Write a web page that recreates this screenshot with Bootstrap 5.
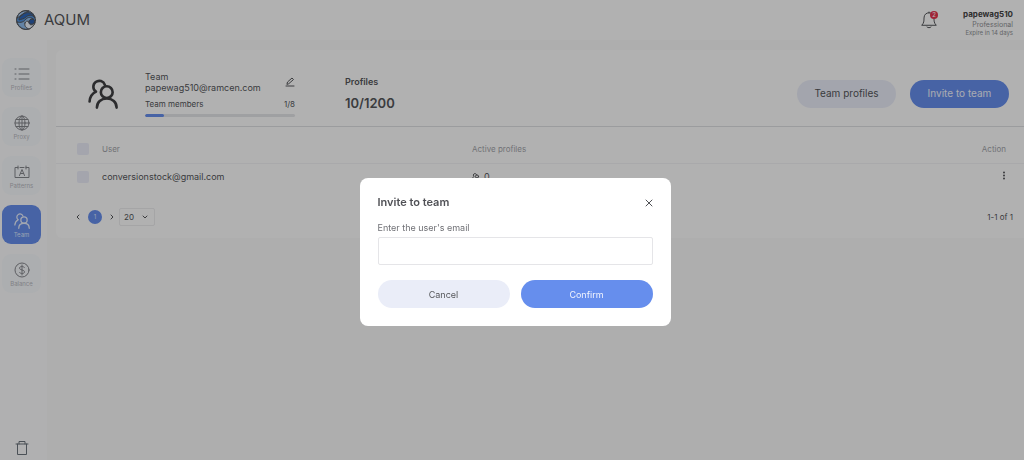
<!DOCTYPE html>
<html lang="en">
<head>
<meta charset="utf-8">
<meta name="viewport" content="width=device-width, initial-scale=1">
<title>AQUM – Team</title>
<link href="https://cdn.jsdelivr.net/npm/bootstrap@5.3.0/dist/css/bootstrap.min.css" rel="stylesheet">
<style>
  :root { --ink: #55565a; --muted: #a3a5aa; --accent: #668eed; --soft: #eaedf8; --line: #ececee; }
  body { font-family: Inter, "Open Sans", sans-serif; font-size: 9px; line-height: 11px; color: var(--ink); background: #f9f9fa; }
  svg { display: block; fill: none; stroke: currentColor; stroke-linecap: round; stroke-linejoin: round; }
  .topbar { height: 40px; background: #fefefe; padding: 0 11px 0 16px; }
  .brand { font-size: 15px; line-height: 20px; color: var(--ink); }
  .bell { margin-right: 26px; color: #77797d; }
  .account { line-height: 9px; color: #8d8f94; font-size: 7px; padding-top: 4px; }
  .account strong { font-size: 8px; line-height: 11px; color: #444; }
  .account small { font-size: 6px; line-height: 7px; }
  .bell-count { position: absolute; top: 0; right: -1px; width: 8px; height: 8px; border-radius: 50%; background: #e5344f; color: #fff; font-size: 6px; line-height: 8px; text-align: center; }
  .sidebar { width: 47px; background: #fdfdfe; padding: 18px 6px 4px 2px; }
  .tiles { gap: 10px; }
  .tile { height: 39px; border-radius: 9px; background: #f7f9fd; color: #85878c; font-size: 6px; line-height: 8px; text-decoration: none; gap: 2px; padding-top: 2px; }
  .tile span { color: #b7b9bf; }
  .tile.active { background: var(--accent); color: #e9effd; }
  .tile.active span { color: #dce6ff; }
  .app { min-height: calc(100vh - 40px); }
  .content { padding: 10px 0 0 9px; }
  .panel { background: #fefefe; border-radius: 6px 0 0 6px; }
  .summary { height: 77px; border-bottom: 1px solid #dfe0e2; padding: 11px 15px 0 32px; }
  .summary .actions { gap: 14px; }
  .summary .pill { width: 99px; font-size: 10px; }
  .team { width: 150px; margin-left: 27px; }
  .team .members { font-size: 8px; margin-top: 6px; }
  .team .meter { height: 3px; margin-top: 4px; background: #e4e5e9; border-radius: 2px; }
  .team .progress-bar { background: var(--accent); border-radius: 2px; }
  .stat { margin-left: 50px; }
  .stat b { font-weight: 600; }
  .stat .total { font-size: 13px; line-height: 16px; font-weight: 600; }
  .pill { height: 28px; border: 0; border-radius: 14px; background: var(--soft); color: var(--ink); padding: 0; font-size: 9px; }
  .pill.primary { background: var(--accent); color: #f2f5fe; }
  .bare { border: 0; background: none; padding: 0; color: inherit; }
  .users { margin: 0; table-layout: fixed; color: var(--ink); --bs-table-bg: transparent; --bs-table-color: var(--ink); }
  .users > :not(caption) > * > * { border: 0; padding: 0; vertical-align: middle; font-weight: 400; box-shadow: none; }
  .users > thead > tr > th { height: 36px; padding-top: 9px; border-bottom: 1px solid #f3f3f5; color: var(--muted); font-size: 8px; }
  .users > tbody > tr > td { height: 27px; }
  .users > * > tr > .pick { width: 46px; padding-left: 21px; }
  .users .user { width: 370px; }
  .users > * > tr > .act { padding-right: 18px; text-align: right; }
  .users .form-check-input { display: block; width: 12px; height: 12px; margin: 0; border: 0; border-radius: 2px; background-color: #ebedf8; }
  .pager { padding: 18px 11px 12px 20px; font-size: 8px; }
  .pager .current { width: 14px; height: 14px; border-radius: 50%; background: var(--accent); color: #dce6ff; font-size: 6px; line-height: 14px; text-align: center; text-decoration: none; }
  .size { width: 36px; height: 18px; margin-left: 5px; }
  .size select { width: 100%; height: 18px; appearance: none; border: 1px solid var(--line); border-radius: 2px; background: none; color: var(--ink); padding: 0 4px; font-size: 8px; }
  .size svg { position: absolute; right: 7px; top: 7px; pointer-events: none; }
  .modal-backdrop { --bs-backdrop-opacity: .3; }
  .modal.invite { padding: 44px 0 0 6px; overflow: hidden; }
  .modal.invite .modal-dialog { max-width: 311px; margin: 0 auto; min-height: 100%; }
  .modal.invite .modal-content { border: 0; border-radius: 8px; padding: 18px; color: #505156; }
  .modal.invite h1 { font-size: 11px; line-height: 13px; font-weight: 600; }
  .modal.invite label { margin: 13px 0 4px; line-height: 11px; color: #707176; }
  .modal.invite .form-control { height: 28px; border: 1px solid #e5e5e8; border-radius: 2px; font-size: 9px; padding: 0 8px; }
  .modal.invite .actions { gap: 11px; margin-top: 15px; }
</style>
</head>
<body>
<svg width="0" height="0" class="position-absolute" aria-hidden="true">
  <symbol id="people" viewBox="0 0 32 32">
    <path d="M18 6.300A6.300 6.300 0 1 0 8.500 13.500C4.500 15.500 2 19 1.700 24"/>
    <circle cx="20" cy="14" r="6.300"/>
    <path d="M9.500 30.500C9.500 24.500 14 20.800 20 20.800S30.500 24.500 30.500 30.500"/>
  </symbol>
</svg>

<header class="topbar d-flex align-items-center">
  <svg width="20" height="20" viewBox="0 0 20 20" stroke="none" aria-hidden="true">
    <circle cx="10" cy="10" r="9.500" fill="#4f8fd8"/>
    <path d="M1 8C2 2 8 0 13 1C8 2 5 6 1 8Z" fill="#a5caf2"/>
    <path d="M6 5C10 1 17 2 19 8C16 4 12 5 10 7C8 9 5 9 3 10C3 8 4 6 6 5Z" fill="#2e68ba"/>
    <path d="M1 12C5 13 8 12 10 9C12 7 15 7 17 9C14 9 13 10 13 12C11 11 9 13 10 15C11 17 13 18 14 18.500C8 21 2 17 1 12Z" fill="#8fbcec"/>
    <path d="M9 13C10 10 13 11 13 13C14 16 17 15 19 12C18 16 15 18 13 19C10 18 8 16 9 13Z" fill="#edf4fc"/>
    <path d="M17 9C19 10 19 12 18 13C16 15 13 14 13 12C13 10 15 9 17 9Z" fill="#2a5eae"/>
  </svg>
  <span class="brand ms-2">AQUM</span>
  <div class="ms-auto d-flex align-items-center">
    <button class="bare bell position-relative" aria-label="Notifications">
      <svg width="16" height="18" viewBox="0 0 16 18"><path d="M1 14C3 12 3 10 3 7C3 0 13 0 13 7C13 10 13 12 15 14ZM6 16C7 17 9 17 10 16M8 2V1"/></svg>
      <span class="bell-count">2</span>
    </button>
    <div class="account text-end d-flex flex-column">
      <strong>papewag510</strong><span>Professional</span><small>Expire in 14 days</small>
    </div>
  </div>
</header>

<div class="app d-flex">
  <nav class="sidebar d-flex flex-column flex-shrink-0" aria-label="Main">
    <div class="d-flex flex-column tiles">
      <a href="#" class="tile d-flex flex-column align-items-center justify-content-center">
        <svg width="16" height="16" viewBox="0 0 16 16"><path d="M5 3H15M5 8H15M5 13H15M1 3H2M1 8H2M1 13H2"/></svg><span>Profiles</span></a>
      <a href="#" class="tile d-flex flex-column align-items-center justify-content-center">
        <svg width="16" height="16" viewBox="0 0 16 16"><circle cx="8" cy="8" r="7"/><ellipse cx="8" cy="8" rx="3" ry="7"/><path d="M8 1V15M1 8H15M2 4.500H14M2 11.500H14"/></svg><span>Proxy</span></a>
      <a href="#" class="tile d-flex flex-column align-items-center justify-content-center">
        <svg width="16" height="16" viewBox="0 0 16 16"><path d="M4 3.500H1V13.500H15V3.500H12M6 3.500H10M4 2V5M12 2V5M5.500 11.500L8 5.500L10.500 11.500M6.500 9.500H9.500"/></svg><span>Patterns</span></a>
      <a href="#" class="tile active d-flex flex-column align-items-center justify-content-center" aria-current="page">
        <svg width="16" height="16" stroke-width="2.500"><use href="#people"/></svg><span>Team</span></a>
      <a href="#" class="tile d-flex flex-column align-items-center justify-content-center">
        <svg width="16" height="16" viewBox="0 0 16 16"><circle cx="8" cy="8" r="7"/><path d="M10.500 5.500C9.500 4 5.500 4 5.500 6.200S10.500 7.500 10.500 9.800S6.500 12 5.500 10.500M8 3V13"/></svg><span>Balance</span></a>
    </div>
    <button class="bare mt-auto mx-auto text-secondary" aria-label="Trash">
      <svg width="14" height="16" viewBox="0 0 14 16"><path d="M1 4H13M2.500 4V14.500H11.500V4M4 4V1.500H10V4"/></svg>
    </button>
  </nav>

  <main class="content flex-grow-1">
    <section class="panel">
      <div class="summary d-flex align-items-center">
        <svg width="30" height="32" stroke-width="2.800" style="color:#3f4043"><use href="#people"/></svg>
        <div class="team">
          <div class="d-flex align-items-center justify-content-between">
            <div>Team<br>papewag510@ramcen.com</div>
            <button class="bare" aria-label="Edit team"><svg width="10" height="10" viewBox="0 0 10 10"><path d="M1 9H9M2 7L2.500 5L7 1L8.500 2.500L4 6.500Z"/></svg></button>
          </div>
          <div class="d-flex justify-content-between members"><span>Team members</span><span>1/8</span></div>
          <div class="progress meter"><div class="progress-bar" role="progressbar" aria-label="Team members" aria-valuenow="1" aria-valuemin="0" aria-valuemax="8" style="width:12.5%"></div></div>
        </div>
        <div class="stat"><b>Profiles</b><div class="total mt-2">10/1200</div></div>
        <div class="ms-auto d-flex actions"><button class="pill">Team profiles</button><button class="pill primary">Invite to team</button></div>
      </div>
      <table class="table users">
        <thead><tr><th class="pick"><input type="checkbox" class="form-check-input" aria-label="Select all users"></th><th class="user">User</th><th>Active profiles</th><th class="act">Action</th></tr></thead>
        <tbody><tr><td class="pick"><input type="checkbox" class="form-check-input" aria-label="Select conversionstock@gmail.com"></td><td>conversionstock@gmail.com</td>
          <td><span class="d-flex align-items-center gap-1"><svg width="8" height="8" stroke-width="4"><use href="#people"/></svg>0</span></td>
          <td class="act"><button class="bare" aria-label="User actions"><svg width="4" height="9" viewBox="0 0 4 9"><path d="M2 1.500V1.600M2 4.500V4.600M2 7.500V7.600" stroke-width="2"/></svg></button></td></tr></tbody>
      </table>
      <div class="pager d-flex align-items-center">
        <a href="#" class="text-reset" aria-label="Previous page"><svg width="4" height="6" viewBox="0 0 4 6"><path d="M3 1L1 3L3 5"/></svg></a>
        <a href="#" class="current mx-2">1</a>
        <a href="#" class="text-reset" aria-label="Next page"><svg width="4" height="6" viewBox="0 0 4 6"><path d="M1 1L3 3L1 5"/></svg></a>
        <div class="size position-relative"><select aria-label="Rows per page"><option>20</option></select><svg width="6" height="4" viewBox="0 0 6 4"><path d="M1 1L3 3L5 1"/></svg></div>
        <span class="ms-auto">1-1 of 1</span>
      </div>
    </section>
  </main>
</div>

<div class="modal-backdrop show"></div>
<div class="modal invite show d-block" role="dialog" aria-modal="true" aria-labelledby="inviteTitle" tabindex="-1">
  <div class="modal-dialog modal-dialog-centered">
    <form class="modal-content">
      <div class="d-flex justify-content-between align-items-center">
        <h1 id="inviteTitle" class="m-0">Invite to team</h1>
        <button type="button" class="bare" aria-label="Close"><svg width="8" height="8" viewBox="0 0 8 8"><path d="M1 1L7 7M7 1L1 7"/></svg></button>
      </div>
      <label for="email">Enter the user's email</label>
      <input type="email" id="email" class="form-control">
      <div class="actions d-flex"><button type="button" class="pill flex-fill w-50">Cancel</button><button type="button" class="pill primary flex-fill w-50">Confirm</button></div>
    </form>
  </div>
</div>
<script src="https://cdn.jsdelivr.net/npm/bootstrap@5.3.0/dist/js/bootstrap.bundle.min.js"></script>
</body>
</html>
